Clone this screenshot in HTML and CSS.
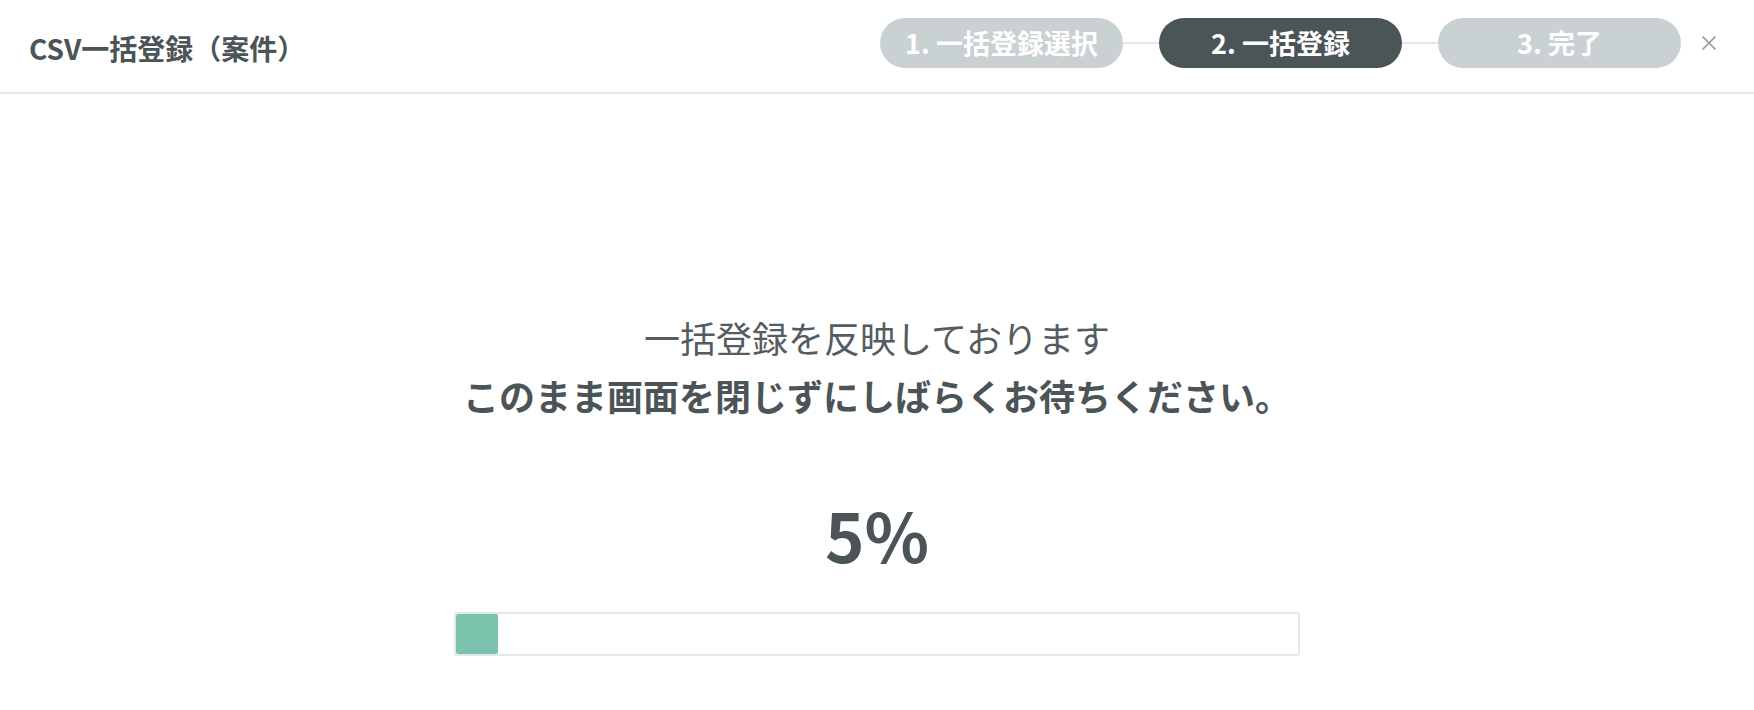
FILE: index.html
```html
<!DOCTYPE html>
<html lang="ja">

<head>
  <meta charset="UTF-8" />
  <title>CSV一括登録（案件）</title>
  <link rel="stylesheet" href="styles.css">
</head>

<body>
  <header class="modal-header">
    <h1 class="modal-title">CSV一括登録（案件）</h1>
    <ol class="steps">
      <li class="step">1. 一括登録選択</li>
      <li class="step-line"></li>
      <li class="step active">2. 一括登録</li>
      <li class="step-line"></li>
      <li class="step">3. 完了</li>
    </ol>
    <button class="close-button" aria-label="閉じる">
      <svg width="16" height="16" viewBox="0 0 16 16">
        <path d="M1.5 1.5 L14.5 14.5 M14.5 1.5 L1.5 14.5" stroke="#8c979b" stroke-width="1.6" fill="none" />
      </svg>
    </button>
  </header>

  <main class="progress-area">
    <p class="message">一括登録を反映しております</p>
    <p class="message strong">このまま画面を閉じずにしばらくお待ちください。</p>
    <div class="percent">5%</div>
    <div class="bar">
      <div class="bar-fill" style="width: 5%"></div>
    </div>
  </main>
</body>

</html>
```

FILE: styles.css
```css
/* Reset default margin and padding */
* {
  margin: 0;
  padding: 0;
  box-sizing: border-box;
}

body {
  font-family: "Noto Sans CJK JP", "Noto Sans", sans-serif;
  color: #4b5457;
  background-color: white;
  height: 100vh;
  overflow: hidden;
}

/* Header with title and steps */
.modal-header {
  display: flex;
  align-items: center;
  height: 94px;
  padding: 0 37px 6px 29px;
  border-bottom: 2px solid #e4eaed;
}

.modal-title {
  flex: 1;
  font-size: 28px;
  font-weight: bold;
  padding-top: 10px;
}

.steps {
  display: flex;
  align-items: center;
  list-style: none;
}

.step {
  width: 243px;
  height: 50px;
  line-height: 50px;
  border-radius: 25px;
  background-color: #c9d1d3;
  color: white;
  font-size: 27px;
  font-weight: bold;
  text-align: center;
}

.step.active {
  background-color: #4b5457;
}

.step-line {
  width: 36px;
  height: 2px;
  background-color: #e2e8ea;
}

.close-button {
  margin-left: 20px;
  background-color: transparent;
  border: none;
  cursor: pointer;
  display: flex;
}

/* Progress area */
.progress-area {
  display: flex;
  flex-direction: column;
  align-items: center;
  padding-top: 214px;
}

.message {
  font-size: 36px;
  line-height: 58px;
  color: #545c5f;
}

.message.strong {
  font-weight: bold;
  color: #4b5457;
}

.percent {
  margin-top: 76px;
  font-size: 67px;
  line-height: 1;
  font-weight: bold;
}

.bar {
  margin-top: 45px;
  width: 846px;
  height: 44px;
  border: 2px solid #e2e8eb;
  border-radius: 3px;
}

.bar-fill {
  height: 100%;
  background-color: #7cc3ae;
  border-radius: 2px;
}
```
